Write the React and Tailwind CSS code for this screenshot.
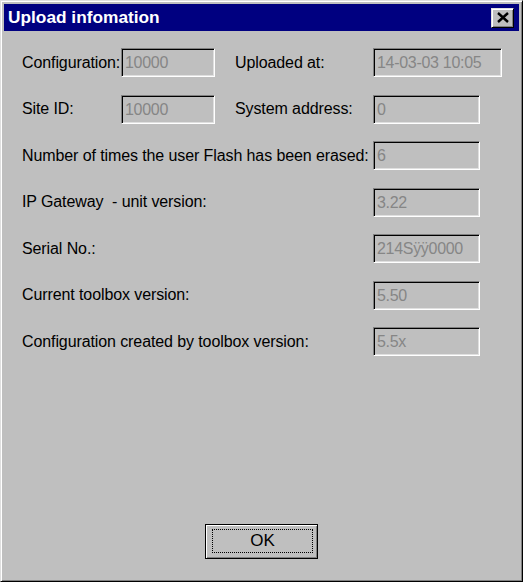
const FONT = { fontFamily: '"Liberation Sans", Arial, sans-serif' };

const Field = ({ value, w }) => (
  <div
    className={`h-[29px] ${w} shrink-0 border border-t-[#808080] border-l-[#808080] border-b-white border-r-white shadow-[inset_1px_1px_#000,inset_-1px_-1px_#dfdfdf] flex items-center pl-[3px] pt-[1px] text-[16px] tracking-[-0.3px] text-[#868686] whitespace-pre`}
  >
    {value}
  </div>
);

const rows = [
  { label: 'Number of times the user Flash has been erased:', value: '6' },
  { label: 'IP Gateway  - unit version:', value: '3.22' },
  { label: 'Serial No.:', value: '214Sÿÿ0000' },
  { label: 'Current toolbox version:', value: '5.50' },
  { label: 'Configuration created by toolbox version:', value: '5.5x' },
];

export default function App() {
  return (
    <div
      style={FONT}
      className="w-[523px] h-[582px] bg-[#bfbfbf] border border-t-[#dfdfdf] border-l-[#dfdfdf] border-r-black border-b-black shadow-[inset_1px_1px_#fff,inset_-1px_-1px_#808080] p-[3px] flex flex-col text-black"
    >
      {/* Title bar */}
      <div className="h-[27px] bg-[#000080] flex items-center justify-between pl-[4px] pr-[5px] shrink-0">
        <span className="text-white font-bold text-[17.3px]">Upload infomation</span>
        <div className="w-[23px] h-[20px] bg-[#bfbfbf] border border-t-[#dfdfdf] border-l-[#dfdfdf] border-r-black border-b-black shadow-[inset_1px_1px_#fff,inset_-1px_-1px_#808080] flex items-center justify-center">
          <svg width="12" height="11" viewBox="0 0 12 11">
            <path d="M1 1 L11 10 M11 1 L1 10" stroke="#000" strokeWidth="2.4" fill="none" />
          </svg>
        </div>
      </div>

      {/* Content */}
      <div className="flex-1 flex flex-col pl-[18px] pt-[17px] pb-[19px] text-[16px] tracking-[-0.1px]">
        <div className="flex flex-col gap-[17.5px]">
          <div className="flex items-center">
            <span className="w-[99px] shrink-0">Configuration:</span>
            <Field value="10000" w="w-[94px]" />
            <span className="w-[138px] ml-[20px] shrink-0">Uploaded at:</span>
            <Field value="14-03-03 10:05" w="w-[129px]" />
          </div>
          <div className="flex items-center">
            <span className="w-[99px] shrink-0">Site ID:</span>
            <Field value="10000" w="w-[94px]" />
            <span className="w-[138px] ml-[20px] shrink-0">System address:</span>
            <Field value="0" w="w-[107px]" />
          </div>
          {rows.map((r) => (
            <div key={r.label} className="flex items-center">
              <span className="w-[351px] shrink-0 whitespace-pre">{r.label}</span>
              <Field value={r.value} w="w-[107px]" />
            </div>
          ))}
        </div>

        <div className="mt-auto flex justify-center pr-[18px]">
          <button className="w-[113px] h-[35px] bg-[#bfbfbf] border border-black shadow-[inset_1px_1px_#fff,inset_-1px_-1px_#808080] pt-[4px] pb-[5px] pl-[6px] pr-[4px] flex">
            <div className="flex-1 border border-dotted border-black flex items-center justify-center text-[17px] tracking-[0px]">
              OK
            </div>
          </button>
        </div>
      </div>
    </div>
  );
}
